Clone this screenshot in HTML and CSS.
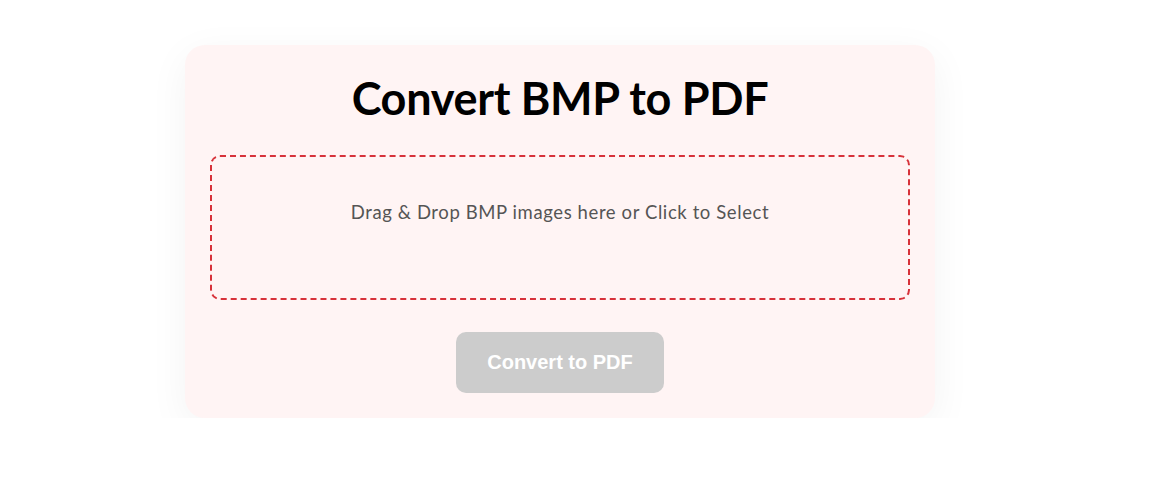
FILE: index.html
```html
<!DOCTYPE html>
<html>
<head>
<meta charset="utf-8">
<link rel="stylesheet" href="styles.css">
</head>
<body>
<div class="page">
  <div class="card">
    <h1 class="title">Convert BMP to PDF</h1>
    <div class="dropzone">
      <p class="drop-text">Drag &amp; Drop BMP images here or Click to Select</p>
    </div>
    <button class="convert-btn" disabled>Convert to PDF</button>
  </div>
</div>
</body>
</html>
```

FILE: styles.css
```css
html, body {
  margin: 0;
  padding: 0;
  background: #ffffff;
}
body {
  font-family: "Lato", "Noto Sans", sans-serif;
}
.page {
  display: flex;
  justify-content: flex-start;
  padding: 45px 0 0 185px;
}
.card {
  width: 750px;
  box-sizing: border-box;
  background: #fff4f4;
  border-radius: 20px;
  box-shadow: 0 10px 40px rgba(0, 0, 0, 0.05);
  padding: 25px 25px 25px;
  display: flex;
  flex-direction: column;
  align-items: center;
}
.title {
  margin: 0 0 29px;
  font-size: 45px;
  line-height: 56px;
  font-weight: 700;
  color: #000000;
  letter-spacing: -0.3px;
}
.dropzone {
  align-self: stretch;
  box-sizing: border-box;
  height: 145px;
  border: 2px dashed #d7323a;
  border-radius: 10px;
  padding-top: 42px;
  text-align: center;
}
.drop-text {
  margin: 0;
  font-size: 18.5px;
  line-height: 26px;
  letter-spacing: 0.6px;
  color: #555555;
}
.convert-btn {
  margin-top: 32px;
  width: 208px;
  height: 61px;
  border: none;
  border-radius: 10px;
  background: #cccccc;
  color: #ffffff;
  font-family: "Liberation Sans", Arial, sans-serif;
  font-size: 20px;
  font-weight: 700;
}
```
